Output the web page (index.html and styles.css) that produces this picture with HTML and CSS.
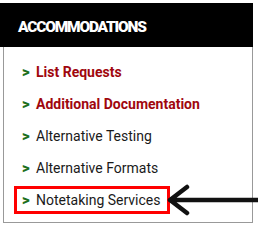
FILE: index.html
```html
<!DOCTYPE html>
<html lang="en">
<head>
    <meta charset="UTF-8">
    <title>Accommodations</title>
    <link rel="stylesheet" href="styles.css">
</head>
<body>
    <div class="sidebar">
        <h2 class="sidebar-title">ACCOMMODATIONS</h2>
        <ul class="nav-list">
            <li class="nav-item featured"><span class="chev">&gt;</span>List Requests</li>
            <li class="nav-item featured"><span class="chev">&gt;</span>Additional Documentation</li>
            <li class="nav-item"><span class="chev">&gt;</span>Alternative Testing</li>
            <li class="nav-item"><span class="chev">&gt;</span>Alternative Formats</li>
            <li class="nav-item">
                <span class="highlight"><span class="chev">&gt;</span>Notetaking Services</span>
                <svg class="arrow" width="94" height="32" viewBox="0 0 94 32">
                    <path d="M4 16 H92 M4 16 L21 3 M4 16 L21 29" stroke="#111" stroke-width="4.5" stroke-linecap="round" stroke-linejoin="round" fill="none"/>
                </svg>
            </li>
        </ul>
    </div>
</body>
</html>
```

FILE: styles.css
```css
body, html {
    margin: 0;
    padding: 0;
    background: #fff;
    font-family: Roboto, "Liberation Sans", sans-serif;
}
.sidebar {
    width: 248px;
    height: 219px;
    margin-left: 3px;
    border: 1px solid #999;
    border-top: none;
    margin-top: 3px;
    position: relative;
}
.sidebar-title {
    margin: 0 -1px 0 -4px;
    padding: 0 0 0 18px;
    height: 43px;
    line-height: 46px;
    background: #000;
    color: #fff;
    font-size: 15.5px;
    font-weight: 900;
    letter-spacing: -1.2px;
    border-top: 1px solid #000;
}
.nav-list {
    list-style: none;
    margin: 0;
    padding: 9px 0 0 0;
}
.nav-item {
    position: relative;
    display: flex;
    align-items: center;
    height: 32px;
    padding-left: 16px;
    font-size: 14px;
    color: #1a1a1a;
}
.nav-item.featured {
    color: #a0070e;
    font-weight: 700;
}
.chev {
    flex: none;
    width: 14px;
    padding-left: 2px;
    color: #1d6f1d;
    font-weight: 900;
    font-size: 15px;
    line-height: 1;
}
.highlight {
    display: inline-flex;
    align-items: center;
    margin-left: -6px;
    padding: 3px 6px 3px 3px;
    border: 3px solid #f00;
}
.arrow {
    position: absolute;
    left: 162px;
    top: 0;
}
```
